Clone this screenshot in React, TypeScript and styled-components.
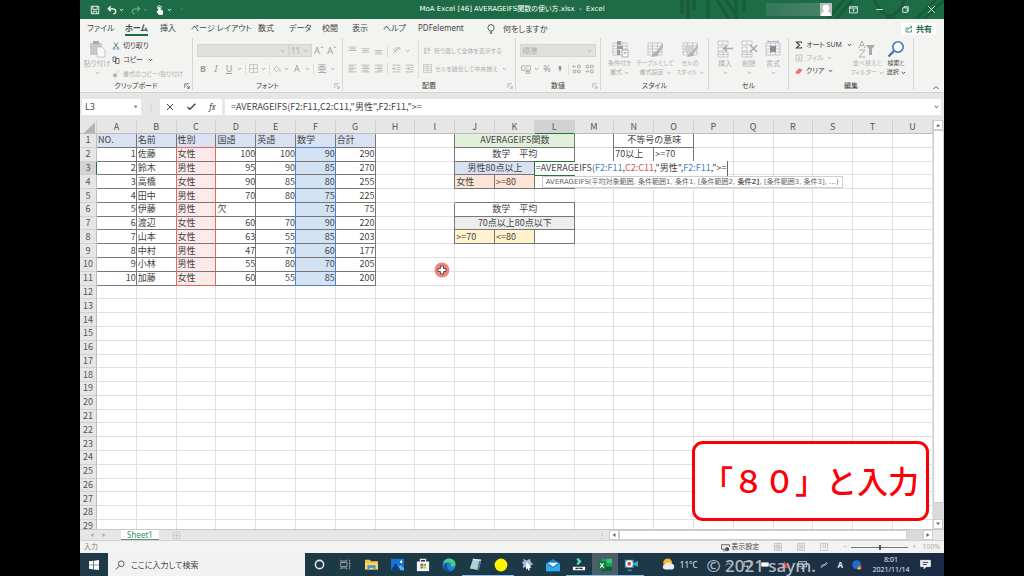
import React from "react";
import styled, { createGlobalStyle, css } from "styled-components";

const Global = createGlobalStyle`
  * { box-sizing: border-box; }
  body { margin: 0; background: #000; }
  button, input, select { font: inherit; color: inherit; margin: 0; padding: 0; border: 0; background: none; border-radius: 0; outline: 0; }
`;

const uiFont = `"Noto Sans", "Noto Sans CJK JP", sans-serif`;
const wideFont = `"DejaVu Sans", "Noto Sans CJK JP", sans-serif`;
const cellFont = `"Noto Sans CJK JP", "Noto Sans", sans-serif`;

/* ---------- frame ---------- */

const Screen = styled.main`
  position: relative;
  display: flex;
  flex-direction: column;
  height: 100vh;
  margin: 0 80px;
  overflow: hidden;
  background: #e6e6e6;
  color: #444;
  font-family: ${uiFont};
  font-size: 8px;
  line-height: 10px;
  font-feature-settings: "palt";
  white-space: nowrap;
`;

const TitleBar = styled.header`
  position: relative;
  display: flex;
  align-items: center;
  justify-content: space-between;
  flex: none;
  height: 19px;
  padding: 0 8px 0 10px;
  background: #1e6b47;
  color: #fff;
`;

const TitlePattern = styled.svg`
  position: absolute;
  right: 0;
  top: 0;
  width: 270px;
  height: 19px;
`;

const TitleText = styled.h1`
  position: absolute;
  inset: 0;
  margin: 0;
  font-family: ${wideFont};
  font-size: 7px;
  font-weight: 400;
  line-height: 19px;
  text-align: center;
`;

const TitleTools = styled.div<{ $gap: number }>`
  position: relative;
  display: flex;
  align-items: center;
  gap: ${(p) => p.$gap}px;
`;

const Account = styled.div`
  display: flex;
  justify-content: flex-end;
  width: 66px;
  height: 13px;
  background: linear-gradient(90deg, #35775a, #4a8468);
`;

const IconButton = styled.button<{ $dim?: boolean }>`
  display: flex;
  align-items: center;
  gap: 2px;
  opacity: ${(p) => (p.$dim ? 0.35 : 1)};
`;

/* ---------- ribbon ---------- */

const TabBar = styled.nav`
  display: flex;
  align-items: center;
  flex: none;
  height: 19px;
  padding: 0 8px 0 7px;
  background: #f3f3f1;
`;

const Tab = styled.button<{ $active?: boolean; $w: number }>`
  width: ${(p) => p.$w}px;
  height: 15px;
  line-height: 12px;
  text-align: left;
  font-weight: ${(p) => (p.$active ? 700 : 400)};
  span {
    display: inline-block;
    border-bottom: 2px solid ${(p) => (p.$active ? "#1e6b47" : "transparent")};
  }
`;

const Tell = styled.button`
  display: flex;
  align-items: center;
  gap: 7px;
`;

const Share = styled.button`
  display: flex;
  align-items: center;
  gap: 3px;
  height: 12px;
  margin-left: auto;
  padding: 0 4px;
  background: #fff;
  color: #1e6b47;
  font-weight: 700;
`;

const Ribbon = styled.section`
  display: grid;
  grid-template-columns: 113fr 150fr 173fr 85fr 108fr 80fr 125fr 30fr;
  flex: none;
  height: 55px;
  background: #f3f3f1;
  border-bottom: 1px solid #d2d2d2;
`;

const Group = styled.div`
  display: flex;
  flex-direction: column;
  min-width: 0;
  margin-bottom: 2px;
  border-right: 1px solid #d6d6d4;
`;

const GroupBody = styled.div<{ $gap?: number; $pad?: number }>`
  display: flex;
  flex: 1;
  gap: ${(p) => p.$gap ?? 4}px;
  padding: 2px ${(p) => p.$pad ?? 4}px 0;
`;

const GroupLabel = styled.div`
  position: relative;
  height: 8px;
  line-height: 8px;
  font-size: 7px;
  text-align: center;
`;

const Launcher = styled.button`
  position: absolute;
  right: 2px;
  top: 1px;
  display: flex;
`;

const Stack = styled.div<{ $gap?: number; $top?: number }>`
  display: flex;
  flex-direction: column;
  gap: ${(p) => p.$gap ?? 4}px;
  padding-top: ${(p) => p.$top ?? 1}px;
`;

const Line = styled.div<{ $gap?: number; $pad?: number }>`
  display: flex;
  align-items: center;
  gap: ${(p) => p.$gap ?? 4}px;
  height: 13px;
  padding-left: ${(p) => p.$pad ?? 0}px;
`;

const Command = styled.button<{ $off?: boolean; $tight?: boolean }>`
  display: flex;
  align-items: center;
  gap: 3px;
  height: 10px;
  font-size: ${(p) => (p.$tight ? 6 : 7)}px;
  color: ${(p) => (p.$off ? "#b0b0ae" : "#444")};
`;

const BigCommand = styled.button<{ $off?: boolean; $tight?: boolean; $w: number }>`
  display: flex;
  flex-direction: column;
  align-items: center;
  flex: none;
  width: ${(p) => p.$w}px;
  height: 38px;
  font-size: ${(p) => (p.$tight ? 6 : 7)}px;
  line-height: 9px;
  color: ${(p) => (p.$off ? "#b0b0ae" : "#444")};
  & > svg:first-child { margin-bottom: 1px; }
  & > span { display: flex; align-items: center; justify-content: center; gap: 2px; height: 9px; }
`;

const Rule = styled.span<{ $h?: number }>`
  flex: none;
  width: 1px;
  height: ${(p) => p.$h ?? 12}px;
  background: #dededc;
`;

const Letter = styled.button<{ $mark?: "b" | "i" | "u" }>`
  width: 10px;
  line-height: 11px;
  font-size: 9px;
  color: #9c9c9a;
  ${(p) => p.$mark === "b" && css`font-weight: 700;`}
  ${(p) => p.$mark === "i" && css`font-style: italic;`}
  ${(p) => p.$mark === "u" && css`text-decoration: underline;`}
`;

const Combo = styled.label<{ $w: number }>`
  position: relative;
  flex: none;
  width: ${(p) => p.$w}px;
  height: 13px;
  background: #e1e0dc;
  border: 1px solid #d6d5d1;
  color: #b0afab;
  select { appearance: none; display: block; width: 100%; height: 11px; padding-left: 1px; line-height: 11px; }
  svg { position: absolute; right: 3px; top: 4px; }
`;

/* ---------- formula bar ---------- */

const FormulaBar = styled.section`
  display: flex;
  align-items: center;
  flex: none;
  gap: 3px;
  height: 27px;
  padding: 0 3px 0 2px;
`;

const NameBox = styled.label`
  display: flex;
  align-items: center;
  width: 59px;
  height: 16px;
  padding: 0 3px;
  background: #fff;
  font-size: 9px;
  input { width: 100%; }
`;

const Grip = styled.span`
  width: 13px;
  color: #aaa;
  text-align: center;
`;

const EntryTools = styled.div`
  display: flex;
  align-items: center;
  justify-content: space-around;
  width: 62px;
  height: 16px;
  background: #fff;
`;

const FormulaField = styled.label`
  display: flex;
  align-items: center;
  flex: 1;
  height: 16px;
  padding: 0 2px 0 6px;
  background: #fff;
  font-family: ${cellFont};
  font-size: 9px;
  font-feature-settings: normal;
  input { flex: 1; height: 14px; }
`;

/* ---------- sheet ---------- */

const Workspace = styled.section`
  display: flex;
  flex: 1 1 0;
  min-height: 0;
`;

const SheetView = styled.div`
  flex: 1;
  min-width: 0;
  overflow: hidden;
  background: #fff;
`;

const Sheet = styled.table`
  width: 100%;
  height: 414px;
  table-layout: fixed;
  border-collapse: separate;
  border-spacing: 0;
  font-family: ${cellFont};
  font-size: 9px;
  line-height: 12px;
  font-feature-settings: normal;
`;

const HeadCell = styled.th<{ $on?: boolean; $corner?: boolean }>`
  width: ${(p) => (p.$corner ? "17px" : "auto")};
  height: 14px;
  padding: 0;
  background: ${(p) => (p.$on ? "#d2d2d2" : "#e6e6e6")};
  border-right: 1px solid #d0d0d0;
  border-bottom: 1px solid ${(p) => (p.$on ? "#217346" : "#bdbdbd")};
  color: ${(p) => (p.$on ? "#3f6b55" : "#555")};
  font-weight: 400;
  svg { display: block; margin: 1px 1px 0 auto; }
`;

const RowHead = styled.th<{ $on?: boolean }>`
  padding: 0;
  background: ${(p) => (p.$on ? "#d2d2d2" : "#e6e6e6")};
  border-right: 1px solid ${(p) => (p.$on ? "#217346" : "#bdbdbd")};
  border-bottom: 1px solid #d0d0d0;
  color: ${(p) => (p.$on ? "#3f6b55" : "#555")};
  font-weight: 400;
`;

const Cell = styled.td<{
  $align?: string;
  $fill?: string;
  $right: string;
  $bottom: string;
  $left?: string;
  $top?: string;
}>`
  position: relative;
  padding: 0 0 0 1px;
  text-align: ${(p) => p.$align ?? "left"};
  background: ${(p) => p.$fill ?? "transparent"};
  border-right: 1px solid ${(p) => p.$right};
  border-bottom: 1px solid ${(p) => p.$bottom};
  box-shadow: ${(p) =>
    [p.$left && `-1px 0 0 ${p.$left}`, p.$top && `0 -1px 0 ${p.$top}`].filter(Boolean).join(", ") || "none"};
`;

const Editor = styled.div`
  position: absolute;
  z-index: 2;
  left: -1px;
  top: -1px;
  height: 15px;
  padding: 0 0 0 1px;
  line-height: 13px;
  background: linear-gradient(#217346, #217346) 0 0 / 40px 1px no-repeat,
    linear-gradient(#217346, #217346) 0 100% / 40px 1px no-repeat, #fff;
  border-left: 1px solid #217346;
  border-right: 1px solid #666;
`;

const RangeRef = styled.span<{ $color: string }>`
  color: ${(p) => p.$color};
`;

const Hint = styled.div`
  position: absolute;
  z-index: 3;
  left: 7px;
  top: 14px;
  height: 12px;
  padding: 0 3px;
  background: #fff;
  border: 1px solid #cfcfcf;
  font-family: ${wideFont};
  font-size: 7px;
  line-height: 10px;
  font-feature-settings: "palt";
  color: #666;
`;

const ScrollColumn = styled.div`
  display: flex;
  flex-direction: column;
  width: 11px;
  background: #dadada;
`;

const ScrollButton = styled.button`
  display: flex;
  align-items: center;
  justify-content: center;
  flex: none;
  width: 10px;
  height: 10px;
  background: #fff;
  border: 1px solid #cdcdcd;
`;

const Thumb = styled.div<{ $grow: number }>`
  flex: ${(p) => p.$grow};
  background: #fff;
  border: 1px solid #cdcdcd;
`;

const Track = styled.div`
  flex: 16;
`;

const SheetTabs = styled.div`
  display: flex;
  flex: none;
  height: 12px;
  padding-right: 11px;
  border-top: 1px solid #c8c8c8;
  border-bottom: 1px solid #d2d2d2;
`;

const TabNav = styled.div`
  display: flex;
  align-items: center;
  gap: 6px;
  width: 41px;
  padding-left: 9px;
  opacity: 0.45;
`;

const SheetTab = styled.button`
  width: 38px;
  height: 10px;
  line-height: 8px;
  background: #fff;
  border-bottom: 1px solid #4b9a72;
  color: #3b8f65;
`;

const AddSheet = styled.button`
  display: flex;
  align-items: center;
  margin-left: 13px;
`;

const HScroll = styled.div`
  display: flex;
  width: 38%;
  margin-left: 3px;
  background: #dadada;
`;

const SplitGrip = styled.span`
  margin-left: auto;
  color: #aaa;
`;

const StatusBar = styled.footer`
  display: flex;
  align-items: center;
  flex: none;
  gap: 15px;
  height: 12px;
  padding: 0 4px;
  background: #f3f3f1;
  font-size: 7px;
  color: #777;
`;

const Display = styled.button`
  display: flex;
  align-items: center;
  gap: 1px;
  margin-left: auto;
  color: #444;
`;

const Zoom = styled.div`
  display: flex;
  align-items: center;
  gap: 4px;
  color: #b0b0b0;
`;

const ZoomSlider = styled.input`
  appearance: none;
  width: 57px;
  height: 8px;
  background: linear-gradient(#777, #777) center / 100% 1px no-repeat;
  &::-webkit-slider-thumb { appearance: none; width: 2px; height: 5px; background: #555; }
`;

/* ---------- taskbar ---------- */

const Taskbar = styled.footer`
  display: flex;
  align-items: center;
  flex: none;
  height: 23px;
  background: linear-gradient(90deg, #1e3a46, #1d3846 65%, #1b2b45);
  color: #e6e9ec;
`;

const Start = styled.button`
  display: flex;
  justify-content: center;
  width: 28px;
`;

const Search = styled.label`
  display: flex;
  align-items: center;
  gap: 6px;
  width: 197px;
  height: 23px;
  padding-left: 7px;
  background: #f2f2f2;
  color: #444;
  font-size: 8px;
  input { flex: 1; min-width: 0; height: 20px; }
  input::placeholder { color: #444; opacity: 1; }
`;

const Apps = styled.div`
  display: flex;
  margin-left: 1px;
`;

const AppButton = styled.button<{ $state?: "open" | "active" }>`
  display: flex;
  align-items: center;
  justify-content: center;
  width: 26px;
  height: 23px;
  background: ${(p) => (p.$state === "active" ? "#4c5f69" : "transparent")};
  box-shadow: ${(p) => (p.$state ? "inset 0 -1px 0 #8fc0e6" : "none")};
`;

const Tray = styled.div`
  display: flex;
  align-items: center;
  gap: 9px;
  margin-left: auto;
  padding-right: 13px;
`;

const Weather = styled.div`
  display: flex;
  align-items: center;
  gap: 5px;
`;

const TrayHidden = styled.div`
  display: flex;
  align-items: center;
  justify-content: space-between;
  width: 105px;
  padding: 0 4px 0 18px;
`;

const Clock = styled.time`
  display: block;
  width: 40px;
  font-size: 7px;
  line-height: 10px;
  text-align: center;
`;

const Watermark = styled.div`
  position: absolute;
  right: 128px;
  bottom: 0;
  font-size: 17px;
  font-weight: 500;
  line-height: 21px;
  color: #c3c8cd;
  opacity: 0.9;
`;

const Callout = styled.aside`
  position: absolute;
  z-index: 4;
  right: 15px;
  bottom: 55px;
  width: 237px;
  height: 80px;
  padding-left: 7px;
  background: #fff;
  border: 3px solid #fb0007;
  border-radius: 11px;
  font-family: ${cellFont};
  font-feature-settings: normal;
  font-size: 31px;
  font-weight: 500;
  line-height: 71px;
  color: #fb0007;
`;

const Pointer = styled.svg`
  position: absolute;
  z-index: 4;
  left: 354px;
  top: 262px;
`;

/* ---------- icons ---------- */

const Svg = ({ s = 10, h, box = 16, sw = 1.4, children }: { s?: number; h?: number; box?: number; sw?: number; children: React.ReactNode }) => (
  <svg width={s} height={h ?? s} viewBox={`0 0 ${box} ${box}`} fill="none" stroke="currentColor" strokeWidth={sw} aria-hidden="true">
    {children}
  </svg>
);
const Chevron = () => (
  <svg width="5" height="4" viewBox="0 0 5 4" fill="none" stroke="currentColor" aria-hidden="true">
    <path d="M.8 1l1.7 1.7L4.2 1" />
  </svg>
);
const Arrow = ({ d }: { d: string }) => (
  <svg width="6" height="6" viewBox="0 0 6 6" fill="#666" aria-hidden="true"><path d={d} /></svg>
);
const LEFT = "M4.5 1v4L1.5 3z";
const RIGHT = "M1.5 1v4l3-2z";
const UP = "M1 4.5h4L3 2z";
const DOWN = "M1 1.5h4L3 4z";

const LauncherIcon = () => (
  <Svg s={6} sw={2}><path d="M2 13V2h11M6 6l8 8M14 8v6H8" /></Svg>
);
const Lines = ({ rows }: { rows: [number, number, number][] }) => (
  <Svg s={9} sw={1.4}>{rows.map(([x1, x2, y]) => <path key={y} d={`M${x1} ${y}H${x2}`} />)}</Svg>
);
const PasteIcon = () => (
  <Svg s={18} box={18} sw={0.8}>
    <path d="M2 3h12v12H2z" fill="#c9c7c9" stroke="none" />
    <path d="M5 1h6v3H5z" fill="#aaa8aa" stroke="none" />
    <path d="M9 7h5l3 3v7H9z" fill="#f8f8fb" stroke="#b9b9c4" />
  </Svg>
);
const TableIcon = ({ kind }: { kind: "cond" | "table" | "style" | "insert" | "delete" | "format" }) => (
  <Svg s={18} box={18} sw={0.8}>
    {kind === "insert" || kind === "delete" ? (
      <>
        <path d="M2 1h10v4H2zM2 12h10v5H2zM7 1v4M7 12v5M2 14.5h10M2 7h5v4H2z" stroke="#bdbac6" fill="#f7f7f9" />
        {kind === "insert"
          ? <path d="M17 8.5H8M11 5.5l-3 3 3 3" strokeWidth="1.6" stroke="#aaa" />
          : <path d="M10 5l7 7M17 5l-7 7" strokeWidth="1.6" stroke="#aaa" />}
      </>
    ) : (
      <>
        <path d="M2 3h14v12H2zM2 6h14M2 9h14M2 12h14M6.500 3v12M11.500 3v12" stroke="#bdbac6" fill="#f7f7f9" />
        {kind === "cond" && <><path d="M6 1h4v4H6zM6 6h6v3H6zM6 10h3v5H6z" fill="#9c9c9e" stroke="none" /><path d="M11 10h6v7h-6zM12.500 14.500l3-2M12.500 12.500h3" fill="#fff" stroke="#999" /></>}
        {kind === "table" && <path d="M17 3l-6 8-3 1-3 5 7-1 1-3 4-6z" fill="#b4b2b4" stroke="none" />}
        {kind === "style" && <><path d="M4 5h9v7H4z" fill="#d0ced6" stroke="none" /><path d="M17 4l-6 8-3 1-2 4 6-1 1-3 4-6z" fill="#b4b2b4" stroke="none" /></>}
        {kind === "format" && <><path d="M6 6h6v6H6z" fill="#8f8f91" stroke="none" /><path d="M4 1.500h10M4 0v3M14 0v3" stroke="#aaa" /></>}
      </>
    )}
  </Svg>
);

/* ---------- sheet data ---------- */

const GRID = "#e1e1e1";
const DARK = "#777";
const RED = "#e06a62";
const BLUE = "#4a86d0";
const LETTERS = "ABCDEFGHIJKLMNOPQRSTU".split("");

type CellData = { v?: string; align?: string; fill?: string; span?: number; line?: string };
const cells: Record<string, CellData> = {};

["NO.", "名前", "性別", "国語", "英語", "数学", "合計"].forEach((v, i) => {
  cells[LETTERS[i] + 1] = { v, fill: "#d9e1f2" };
});
const students: string[][] = [
  ["1", "佐藤", "女性", "100", "100", "90", "290"],
  ["2", "鈴木", "男性", "95", "90", "85", "270"],
  ["3", "高橋", "女性", "90", "85", "80", "255"],
  ["4", "田中", "男性", "70", "80", "75", "225"],
  ["5", "伊藤", "男性", "欠", "", "75", "75"],
  ["6", "渡辺", "女性", "60", "70", "90", "220"],
  ["7", "山本", "女性", "63", "55", "85", "203"],
  ["8", "中村", "男性", "47", "70", "60", "177"],
  ["9", "小林", "男性", "55", "80", "70", "205"],
  ["10", "加藤", "女性", "60", "55", "85", "200"],
];
students.forEach((row, r) =>
  row.forEach((v, c) => {
    cells[LETTERS[c] + (r + 2)] = {
      v,
      align: /^\d+$/.test(v) ? "right" : "left",
      fill: c === 2 ? "#fbeae9" : c === 5 ? "#d4e3f4" : undefined,
      line: c === 2 ? RED : c === 5 ? BLUE : undefined,
    };
  }),
);
Object.assign(cells, {
  J1: { v: "AVERAGEIFS関数", align: "center", fill: "#e2efda", span: 3 },
  J2: { v: "数学　平均", align: "center", span: 3 },
  J3: { v: "男性80点以上", align: "center", fill: "#d9e1f2", span: 2 },
  L3: {},
  J4: { v: "女性", fill: "#fce4d6" },
  K4: { v: ">=80", fill: "#fce4d6" },
  L4: {},
  J6: { v: "数学　平均", align: "center", span: 3 },
  J7: { v: "70点以上80点以下", align: "center", fill: "#ededed", span: 3 },
  J8: { v: ">=70", fill: "#fff2cc" },
  K8: { v: "<=80", fill: "#fff2cc" },
  L8: {},
  N1: { v: "不等号の意味", align: "center", span: 2 },
  N2: { v: "70以上" },
  O2: { v: ">=70" },
  N3: {},
  O3: {},
} as Record<string, CellData>);

const covered = new Set<string>();
Object.entries(cells).forEach(([key, { span = 1 }]) => {
  const c = LETTERS.indexOf(key[0]);
  for (let i = 1; i < span; i++) covered.add(LETTERS[c + i] + key.slice(1));
});
const filled = (c: number, r: number) => {
  const key = LETTERS[c] + r;
  return key in cells || covered.has(key);
};

const FORMULA = '=AVERAGEIFS(F2:F11,C2:C11,"男性",F2:F11,">=';

const ActiveEditor = () => (
  <>
    <Editor>
      =AVERAGEIFS(<RangeRef $color="#4a7fc0">F2:F11</RangeRef>,<RangeRef $color="#c9564f">C2:C11</RangeRef>,"男性",
      <RangeRef $color="#4a7fc0">F2:F11</RangeRef>,"&gt;=
    </Editor>
    <Hint role="tooltip">
      AVERAGEIFS(平均対象範囲, 条件範囲1, 条件1, [条件範囲2, <b>条件2]</b>, [条件範囲3, 条件3], ...)
    </Hint>
  </>
);

const SheetRow = ({ r }: { r: number }) => (
  <tr>
    <RowHead scope="row" $on={r === 3}>{r}</RowHead>
    {LETTERS.map((letter, c) => {
      const key = letter + r;
      if (covered.has(key)) return null;
      const data = cells[key];
      if (!data) return <Cell key={key} $right={GRID} $bottom={GRID} />;
      const ranged = data.line;
      return (
        <Cell
          key={key}
          colSpan={data.span}
          $align={data.align}
          $fill={data.fill}
          $right={ranged ?? DARK}
          $bottom={ranged && r === 11 ? ranged : DARK}
          $left={ranged ?? (c > 0 && !filled(c - 1, r) ? DARK : undefined)}
          $top={ranged && r === 2 ? ranged : r > 1 && !filled(c, r - 1) ? DARK : undefined}
        >
          {data.v}
          {key === "L3" && <ActiveEditor />}
        </Cell>
      );
    })}
  </tr>
);

const GroupFoot = ({ label, launch, off }: { label: string; launch?: boolean; off?: boolean }) => (
  <GroupLabel>
    {label}
    {launch && <Launcher aria-label={`${label}の設定`} style={{ color: off ? "#aaa" : "#555" }}><LauncherIcon /></Launcher>}
  </GroupLabel>
);

const TABS: [string, number][] = [
  ["ファイル", 38], ["ホーム", 35], ["挿入", 31], ["ページ レイアウト", 67], ["数式", 31],
  ["データ", 33], ["校閲", 30], ["表示", 31], ["ヘルプ", 35], ["PDFelement", 68],
];

export default function App() {
  return (
    <>
      <Global />
      <Screen>
        <TitleBar>
          <TitlePattern viewBox="0 0 270 19" fill="none" stroke="#185c3b" strokeWidth="3" aria-hidden="true">
            <path d="M8 0v14M14 0v19M20 0v10M34 0v19M43 0l12 19M52 0l12 19M62 0v19M70 0v12M170 0l-16 19M178 0l-16 19M200 0q6 14 22 19M230 0q-2 12-18 19M262 0l-20 19M270 0l-20 19" />
          </TitlePattern>
          <TitleText>MoA Excel [46] AVERAGEIFS関数の使い方.xlsx &nbsp;-&nbsp; Excel</TitleText>
          <TitleTools $gap={7}>
            <IconButton aria-label="上書き保存"><Svg><path d="M2 2h12v12H2zM4.500 2v5h7V2M5 14v-4h6v4" /></Svg></IconButton>
            <IconButton aria-label="元に戻す"><Svg sw={2}><path d="M6 2L2 6l4 4M2 6h7q5 0 5 4t-4 4" /></Svg><Chevron /></IconButton>
            <IconButton aria-label="やり直し" $dim><Svg sw={2}><path d="M10 2l4 4-4 4M14 6H7Q2 6 2 10t4 4" /></Svg><Chevron /></IconButton>
            <IconButton aria-label="タッチ"><Svg><circle cx="7" cy="4" r="3" /><path d="M6 4v6H3l3 5h6V9L8 8V4z" fill="currentColor" /></Svg><Chevron /></IconButton>
            <IconButton aria-label="カスタマイズ"><Arrow d={DOWN} /></IconButton>
          </TitleTools>
          <TitleTools $gap={17}>
            <Account>
              <Svg s={12} h={13} sw={0}><path d="M0-1h16v18H0z" fill="#bdbdbd" /><circle cx="8" cy="6" r="4.500" fill="#fff" /><path d="M1 17q1-7 7-7t7 7z" fill="#fff" /></Svg>
            </Account>
            <IconButton aria-label="リボンの表示オプション"><Svg s={9}><path d="M1 3h14v11H1zM1 5.500h14M8 12V8M6 9.500l2-2 2 2" /></Svg></IconButton>
            <IconButton aria-label="最小化"><Svg s={9}><path d="M2 8h12" /></Svg></IconButton>
            <IconButton aria-label="元のサイズに戻す"><Svg s={9}><path d="M3 5h8v8H3zM5.500 5V3H13v8h-2" /></Svg></IconButton>
            <IconButton aria-label="閉じる"><Svg s={9}><path d="M2 2l12 12M14 2L2 14" /></Svg></IconButton>
          </TitleTools>
        </TitleBar>

        <TabBar>
          {TABS.map(([name, w]) => (
            <Tab key={name} $w={w} $active={name === "ホーム"}><span>{name}</span></Tab>
          ))}
          <Tell><Svg><path d="M5.500 11Q3 8 3 6a5 5 0 0 1 10 0q0 2-2.500 5zM6 13h4M6.500 15h3" /></Svg>何をしますか</Tell>
          <Share><Svg s={8}><path d="M6 6H2v8h11V9M5 11q0-6 8-7M10 1l4 3-4 3" /></Svg>共有</Share>
        </TabBar>

        <Ribbon>
          <Group>
            <GroupBody $gap={2}>
              <BigCommand $off $w={26}><PasteIcon /><span>貼り付け</span><span><Chevron /></span></BigCommand>
              <Stack $top={1}>
                <Command><Svg s={8}><path d="M4 1l7 10M12 1L5 11" /><g stroke="#3f78b5"><circle cx="4" cy="13" r="2" /><circle cx="12" cy="13" r="2" /></g></Svg>切り取り</Command>
                <Command><Svg s={8}><path d="M2 2h6v9H2zM7 5h7v10H7z" fill="#f3f3f1" /></Svg>コピー&nbsp;<Chevron /></Command>
                <Command $off $tight><Svg s={8}><path d="M14 1L8 7M3 7l6 6M2 10l5-3 3 3-4 5z" fill="currentColor" /></Svg>書式のコピー/貼り付け</Command>
              </Stack>
            </GroupBody>
            <GroupFoot label="クリップボード" launch />
          </Group>

          <Group>
            <GroupBody>
              <Stack $top={4} $gap={5}>
                <Line $gap={0}>
                  <Combo $w={92}><select aria-label="フォント"><option> </option></select><Chevron /></Combo>
                  <Combo $w={23}><select aria-label="フォント サイズ"><option>11</option></select><Chevron /></Combo>
                  <Line $gap={3} $pad={2}><Letter>Aˆ</Letter><Letter>Aˇ</Letter></Line>
                </Line>
                <Line $gap={3} $pad={1} style={{ color: "#a8a8a6" }}>
                  <Letter $mark="b">B</Letter><Letter $mark="i">I</Letter><Letter $mark="u">U</Letter><Chevron />
                  <Rule />
                  <Svg s={9} sw={1}><path d="M1 1h14v14H1zM8 1v14M1 8h14" /></Svg><Chevron />
                  <Rule />
                  <Svg s={8}><path d="M7 2l6 6-6 5-5-5zM14 9v4" /></Svg><Chevron />
                  <Letter>A</Letter><Chevron />
                  <Rule />
                  <Letter>亜</Letter><Chevron />
                </Line>
              </Stack>
            </GroupBody>
            <GroupFoot label="フォント" launch off />
          </Group>

          <Group>
            <GroupBody $gap={4} style={{ color: "#adadab" }}>
              <Stack $top={4} $gap={5}>
                <Line $pad={1}>
                  <Lines rows={[[1, 15, 2], [3, 13, 5], [1, 15, 8]]} />
                  <Lines rows={[[1, 15, 5], [3, 13, 8], [1, 15, 11]]} />
                  <Lines rows={[[1, 15, 8], [3, 13, 11], [1, 15, 14]]} />
                  <Rule />
                  <Svg s={9}><path d="M2 13L13 3M10 3h4v4M2 5l5 6M5 4q3-2 4 1t-3 3" /></Svg><Chevron />
                </Line>
                <Line $pad={1}>
                  <Lines rows={[[1, 15, 2], [1, 10, 5], [1, 15, 8], [1, 10, 11], [1, 15, 14]]} />
                  <Lines rows={[[1, 15, 2], [3, 13, 5], [1, 15, 8], [3, 13, 11], [1, 15, 14]]} />
                  <Lines rows={[[1, 15, 2], [6, 15, 5], [1, 15, 8], [6, 15, 11], [1, 15, 14]]} />
                  <Rule />
                  <Svg s={9}><path d="M1 2h14M9 6h6M9 10h6M1 14h14M8 8H2M4 5L1 8l3 3" /></Svg>
                  <Svg s={9}><path d="M1 2h14M9 6h6M9 10h6M1 14h14M1 8h6M5 5l3 3-3 3" /></Svg>
                </Line>
              </Stack>
              <Rule $h={38} />
              <Stack $top={4} $gap={5}>
                <Line><Command $off $tight><Svg s={8}><path d="M2 3h5M4 1v7M1 8h6M10 1v6h4V4h-4M2 12h11M5 10l-3 2 3 2" /></Svg>折り返して全体を表示する</Command></Line>
                <Line><Command $off $tight><Svg s={9} sw={1}><path d="M1 1h14v14H1zM1 5h14M1 11h14M8 1v4M8 11v4M4 8h8" /></Svg>セルを結合して中央揃え&nbsp;<Chevron /></Command></Line>
              </Stack>
            </GroupBody>
            <GroupFoot label="配置" launch off />
          </Group>

          <Group>
            <GroupBody>
              <Stack $top={4} $gap={5}>
                <Combo $w={76}><select aria-label="表示形式"><option>標準</option></select><Chevron /></Combo>
                <Line $gap={3} $pad={1} style={{ color: "#a8a8a6" }}>
                  <Svg s={10}><path d="M1 3h14v7H1zM6 6.500h4M8 12h6v3H8z" /></Svg><Chevron />
                  <Letter>%</Letter>
                  <Svg s={10} sw={0}><path d="M6 3h4v5q-1 4-4 5 2-2 2-4H6z" fill="#8c8c8a" /></Svg>
                  <Rule />
                  <Svg s={10}><path d="M1 4h5M3 2L1 4l2 2M9 2h4v4H9zM2 10h4v4H2zM9 10h4v4H9z" /></Svg>
                  <Svg s={10}><path d="M2 2h4v4H2zM9 2h4v4H9zM1 12h5M4 10l2 2-2 2M9 10h4v4H9z" /></Svg>
                </Line>
              </Stack>
            </GroupBody>
            <GroupFoot label="数値" launch off />
          </Group>

          <Group>
            <GroupBody $gap={1} $pad={4}>
              <BigCommand $off $tight $w={29}><TableIcon kind="cond" /><span>条件付き</span><span>書式<Chevron /></span></BigCommand>
              <BigCommand $off $tight $w={40}><TableIcon kind="table" /><span>テーブルとして</span><span>書式設定<Chevron /></span></BigCommand>
              <BigCommand $off $tight $w={28}><TableIcon kind="style" /><span>セルの</span><span>スタイル<Chevron /></span></BigCommand>
            </GroupBody>
            <GroupFoot label="スタイル" />
          </Group>

          <Group>
            <GroupBody $gap={0}>
              <BigCommand $off $w={24}><TableIcon kind="insert" /><span>挿入</span><span><Chevron /></span></BigCommand>
              <BigCommand $off $w={24}><TableIcon kind="delete" /><span>削除</span><span><Chevron /></span></BigCommand>
              <BigCommand $off $w={24}><TableIcon kind="format" /><span>書式</span><span><Chevron /></span></BigCommand>
            </GroupBody>
            <GroupFoot label="セル" />
          </Group>

          <Group>
            <GroupBody $gap={0} $pad={6}>
              <Stack $top={0} $gap={3} style={{ width: 58 }}>
                <Command><Svg s={8} sw={2.4}><path d="M13 4V2H3l6 6-6 6h10v-2" /></Svg>オート SUM&nbsp; <Chevron /></Command>
                <Command $off><Svg s={8}><path d="M2 2h12v12H2zM8 4v7M5 8l3 3 3-3" /></Svg>フィル<Chevron /></Command>
                <Command><Svg s={8} sw={0}><path d="M9 2l6 4-7 8-6-1-1-3z" fill="#e8737a" /></Svg>クリア<Chevron /></Command>
              </Stack>
              <BigCommand $off $tight $w={31}>
                <Svg s={18} box={18} sw={1}><path d="M1 8l3-7 3 7M2 5.500h4M1 10h6l-6 7h6" /><path d="M8 5h9l-3 4v6h-3V9z" fill="#aaa" stroke="none" /></Svg>
                <span>並べ替えと</span><span>フィルター<Chevron /></span>
              </BigCommand>
              <BigCommand $tight $w={27}>
                <Svg s={18} box={18} sw={1.6}><g stroke="#3f78b5"><circle cx="11" cy="7" r="5.200" fill="#fff" /><path d="M7 11l-5.500 5.500" strokeWidth="2.400" /></g></Svg>
                <span>検索と</span><span>選択<Chevron /></span>
              </BigCommand>
            </GroupBody>
            <GroupFoot label="編集" />
          </Group>

          <Stack $top={47} style={{ alignItems: "flex-end", paddingRight: 5 }}>
            <IconButton aria-label="リボンを折りたたむ"><svg width="6" height="5" viewBox="0 0 6 5" fill="none" stroke="#555"><path d="M.5 4L3 1.500 5.500 4" /></svg></IconButton>
          </Stack>
        </Ribbon>

        <FormulaBar>
          <NameBox><input aria-label="名前ボックス" defaultValue="L3" /><Arrow d={DOWN} /></NameBox>
          <Grip>⋮</Grip>
          <EntryTools>
            <IconButton aria-label="キャンセル"><Svg s={8} sw={2}><path d="M2 2l12 12M14 2L2 14" /></Svg></IconButton>
            <IconButton aria-label="入力"><Svg s={9} sw={2.4}><path d="M1 9l4 4L15 3" /></Svg></IconButton>
            <IconButton aria-label="関数の挿入"><i>fx</i></IconButton>
          </EntryTools>
          <FormulaField><input aria-label="数式バー" defaultValue={FORMULA} /><Chevron /></FormulaField>
        </FormulaBar>

        <Workspace>
          <SheetView>
            <Sheet>
              <thead>
                <tr>
                  <HeadCell $corner><svg width="11" height="11" viewBox="0 0 11 11" fill="#b5b5b5" aria-hidden="true"><path d="M11 0v11H0z" /></svg></HeadCell>
                  {LETTERS.map((l) => <HeadCell key={l} scope="col" $on={l === "L"}>{l}</HeadCell>)}
                </tr>
              </thead>
              <tbody>
                {Array.from({ length: 29 }, (_, i) => <SheetRow key={i} r={i + 1} />)}
              </tbody>
            </Sheet>
          </SheetView>
          <ScrollColumn>
            <ScrollButton aria-label="上へ"><Arrow d={UP} /></ScrollButton>
            <Thumb $grow={374} />
            <Track />
            <ScrollButton aria-label="下へ"><Arrow d={DOWN} /></ScrollButton>
          </ScrollColumn>
        </Workspace>

        <SheetTabs>
          <TabNav><Arrow d={LEFT} /><Arrow d={RIGHT} /></TabNav>
          <SheetTab>Sheet1</SheetTab>
          <AddSheet aria-label="新しいシート"><Svg s={9} sw={1}><g stroke="#b5b5b5"><circle cx="8" cy="8" r="7" /><path d="M8 4v8M4 8h8" /></g></Svg></AddSheet>
          <SplitGrip>⋮</SplitGrip>
          <HScroll>
            <ScrollButton aria-label="左へ"><Arrow d={LEFT} /></ScrollButton>
            <Thumb $grow={294} />
            <Track />
            <ScrollButton aria-label="右へ"><Arrow d={RIGHT} /></ScrollButton>
          </HScroll>
        </SheetTabs>

        <StatusBar>
          <span>入力</span>
          <Display><Svg s={9}><path d="M7 11H1V3h14v4M4 14h4" /><circle cx="11" cy="11" r="3" fill="#555" /></Svg>表示設定</Display>
          <Svg s={8}><g stroke="#b8b8b8"><path d="M1 1h14v14H1zM1 6h14M1 10h14M6 1v14M10 1v14" /></g></Svg>
          <Svg s={8}><g stroke="#b8b8b8"><path d="M1 1h14v14H1zM4 4h8v8H4zM6 7h4M6 9h4" /></g></Svg>
          <Svg s={8}><g stroke="#b8b8b8"><path d="M1 1h14v14H1zM6 1v8h5V1" /></g></Svg>
          <Zoom><span>−</span><ZoomSlider type="range" aria-label="ズーム" defaultValue={50} /><span>+</span>&nbsp;100%</Zoom>
        </StatusBar>

        <Taskbar>
          <Start aria-label="スタート"><Svg s={10} sw={0}><path d="M0 2l7-1v6.500H0zM8 1l8-1v7.500H8zM0 8.500h7V15l-7-1zM8 8.500h8V16l-8-1z" fill="#fff" /></Svg></Start>
          <Search>
            <Svg s={10}><circle cx="10" cy="6" r="4.500" /><path d="M7 9.500L1 15" /></Svg>
            <input type="search" aria-label="検索" placeholder="ここに入力して検索" />
          </Search>
          <Apps>
            <AppButton aria-label="Cortana"><Svg s={11} sw={2.2}><circle cx="8" cy="8" r="6" /></Svg></AppButton>
            <AppButton aria-label="タスク ビュー"><Svg s={11} sw={1.2}><g stroke="#aab4ba"><path d="M1 5h9v6H1zM1 1v2h9V1M1 15v-2h9v2M14 1v4M14 8v7M12.500 6.500h3" /></g></Svg></AppButton>
            <AppButton aria-label="エクスプローラー"><Svg s={13} sw={0}><path d="M0 2h6l1.500 2H16v10H0z" fill="#f6c344" /><path d="M0 6h16v8H0z" fill="#fbd56b" /><path d="M3 9h10v5h-2.500v-2h-5v2H3z" fill="#3a95dc" /></Svg></AppButton>
            <AppButton aria-label="フォト"><Svg s={13} sw={0}><path d="M0 1h16v14H0z" fill="#1577d3" /><path d="M0 15L6 6l9 9z" fill="#0b3f86" /><path d="M6 6l4 4 2-1 4 4v2h-4z" fill="#5ab7f2" /><circle cx="12.500" cy="4.500" r="1.500" fill="#fff" /></Svg></AppButton>
            <AppButton aria-label="Microsoft Store"><Svg s={14} sw={1.3}><path d="M5 5V1.500h6V5" stroke="#eee" /><path d="M1 4h14v11H1z" fill="#f5f5f5" stroke="none" /><path d="M5 6.500h3V9H5z" fill="#e34b26" stroke="none" /><path d="M8.500 6.500h3V9h-3z" fill="#7db83c" stroke="none" /><path d="M5 9.600h3V12H5z" fill="#2a9be0" stroke="none" /><path d="M8.500 9.600h3V12h-3z" fill="#f5b71a" stroke="none" /></Svg></AppButton>
            <AppButton aria-label="Edge"><Svg s={14} sw={0}><circle cx="8" cy="8" r="7.500" fill="#1b83d4" /><path d="M1 6q2-6 8-5.500 6.500 1 6.500 7-1 3.500-5.500 2 1-4-2-4.500-4-.5-7 1z" fill="#4ccb83" /><path d="M6 8q-1 6 5 6.500Q5 17 2 12 1 7 6 6z" fill="#0f4f9c" /></Svg></AppButton>
            <AppButton $state="open" aria-label="メモ帳"><Svg s={13} sw={0}><path d="M5 1l10 1-3 13-11-2z" fill="#a9d3dd" /><path d="M15 2l-3 13-2-1 3-12z" fill="#5c6c6e" /><path d="M5 1l10 1v1.500L4.500 2.500z" fill="#e9f3f5" /></Svg></AppButton>
            <AppButton $state="open" aria-label="カーソル強調"><Svg s={14} sw={0}><circle cx="8" cy="8" r="7.300" fill="#fff500" /></Svg></AppButton>
            <AppButton aria-label="ポインター"><Svg s={13} sw={0}><path d="M2 1l5 2 4-2 1 4 3 3-3 1-2 4-3-2-5 1 1-4-2-3 3-1z" fill="#a9b9e0" /><path d="M7 5l6 7h-3l1 3-2 .5-1-3-2 2z" fill="#fff" /></Svg></AppButton>
            <AppButton aria-label="メール"><Svg s={14} sw={0}><path d="M0 6l8-5 8 5v9H0z" fill="#1583d4" /><path d="M2 5.500h12L8 10z" fill="#fff" /><path d="M0 6l8 5.500L16 6v9H0z" fill="#34a8ec" /></Svg></AppButton>
            <AppButton $state="open" aria-label="Filmora"><Svg s={14} sw={0}><path d="M7 0l4 4-4 4-2-1 2-3-2-3z" fill="#5fd9c0" /><path d="M1 10h14v4H1z" fill="#fff" /><path d="M4 11h8v2l-4-1-4 1z" fill="#222" /></Svg></AppButton>
            <AppButton $state="active" aria-label="Excel"><Svg s={14} sw={0}><path d="M4 1h12v14H4z" fill="#1d9a58" /><path d="M10 1h6v5h-6z" fill="#33c481" /><path d="M4 10h12v5H4z" fill="#135c36" /><path d="M0 4h9v9H0z" fill="#107c41" /><path d="M2.500 6l4 5M6.500 6l-4 5" stroke="#fff" strokeWidth="1.300" /></Svg></AppButton>
            <AppButton $state="open" aria-label="録画"><Svg s={14} sw={0}><path d="M1 2h10v9H1zM11 6l5-3v7l-5-2z" fill="#4aa5c8" /><circle cx="6" cy="6.500" r="4" fill="#fff" /><circle cx="6" cy="6.500" r="2.300" fill="#e2453b" /><path d="M4 13h5v2H4z" fill="#3a7fa0" /></Svg></AppButton>
          </Apps>
          <Tray>
            <Weather>
              <Svg s={13} sw={0}><circle cx="7" cy="6" r="5.500" fill="#fbb534" /><path d="M4 14a3 3 0 0 1 0-6 4 4 0 0 1 7-1 3.500 3.500 0 0 1 1 7z" fill="#e9eef3" /></Svg>
              11°C
            </Weather>
            <TrayHidden>
              <Svg s={9}><path d="M3 10l5-5 5 5" /></Svg>
              <Svg s={9}><path d="M2 3h12v8H2zM8 11v3" /></Svg>
              <Svg s={9}><path d="M1 5h12v6H1zM14 7v2" fill="#fff" /></Svg>
              <Svg s={9} sw={0}><path d="M8 2l7 12H1z" fill="#d9443c" /></Svg>
              <Svg s={9}><path d="M1 3h14v9H1zM5 15h6" /></Svg>
            </TrayHidden>
            <Svg s={8}><path d="M7 9l6-6q2 1 0 3l-4 4M9 7l-6 6q-2-1 0-3l4-4" /></Svg>
            <b>A</b>
            <Svg s={10} sw={0}><circle cx="7.500" cy="7.500" r="7" fill="#1d6fd6" /><path d="M9 9h6v5l-4 2z" fill="#e6603a" /><path d="M9 12h4v3H9z" fill="#f5d43c" /></Svg>
            <Clock>8:01<br />2021/11/14</Clock>
            <Svg s={11}><path d="M1 2h14v9H9l-3 3v-3H1zM4 5h8M4 8h8" fill="#eee" stroke="#eee" /><path d="M4 5h8M4 8h6" stroke="#345" /></Svg>
          </Tray>
        </Taskbar>

        <Pointer width="16" height="16" viewBox="0 0 16 16" aria-hidden="true">
          <circle cx="8" cy="8" r="7.500" fill="#f58278" />
          <path d="M6.500 4h3v2.500H12v3H9.500V12h-3V9.500H4v-3h2.500z" fill="#fff" stroke="#444" strokeWidth=".9" />
        </Pointer>
        <Callout>「８０」と入力</Callout>
        <Watermark>© 2021 saym.</Watermark>
      </Screen>
    </>
  );
}
